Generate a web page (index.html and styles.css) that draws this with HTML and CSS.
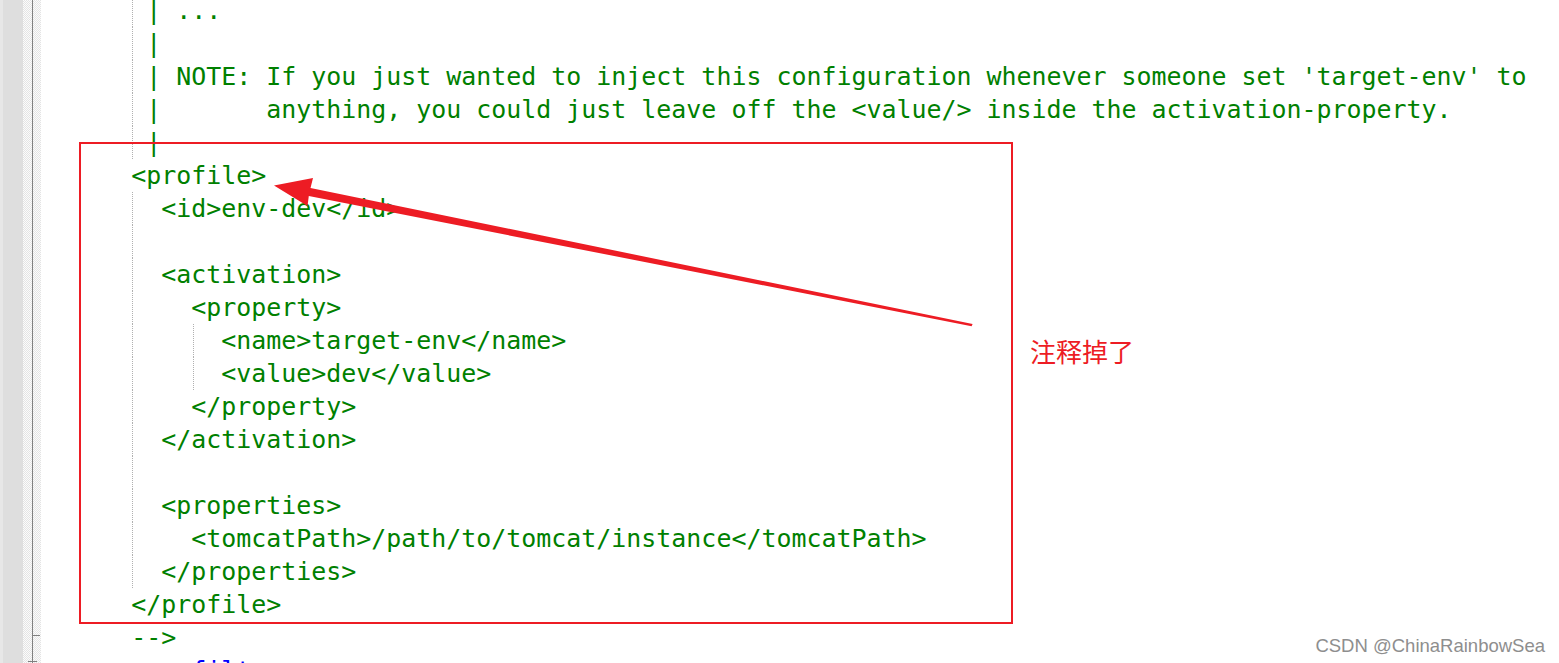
FILE: index.html
```html
<!DOCTYPE html>
<html lang="zh">
<head>
<meta charset="utf-8">
<title>XML editor</title>
<link rel="stylesheet" href="styles.css">
</head>
<body>
<div class="editor">
  <div class="gutter">
    <div class="g-edge"></div>
    <div class="g-margin"></div>
    <div class="g-fold"></div>
  </div>
  <div class="code">
    <div class="line g1">       | ...</div>
    <div class="line g1">       |</div>
    <div class="line g1">       | NOTE: If you just wanted to inject this configuration whenever someone set 'target-env' to</div>
    <div class="line g1">       |       anything, you could just leave off the &lt;value/&gt; inside the activation-property.</div>
    <div class="line g1">       |</div>
    <div class="line">      &lt;profile&gt;</div>
    <div class="line g1">        &lt;id&gt;env-dev&lt;/id&gt;</div>
    <div class="line g1"> </div>
    <div class="line g1">        &lt;activation&gt;</div>
    <div class="line g1">          &lt;property&gt;</div>
    <div class="line g2">            &lt;name&gt;target-env&lt;/name&gt;</div>
    <div class="line g2">            &lt;value&gt;dev&lt;/value&gt;</div>
    <div class="line g1">          &lt;/property&gt;</div>
    <div class="line g1">        &lt;/activation&gt;</div>
    <div class="line g1"> </div>
    <div class="line g1">        &lt;properties&gt;</div>
    <div class="line g1">          &lt;tomcatPath&gt;/path/to/tomcat/instance&lt;/tomcatPath&gt;</div>
    <div class="line g1">        &lt;/properties&gt;</div>
    <div class="line">      &lt;/profile&gt;</div>
    <div class="line">      --&gt;</div>
    <div class="line tag-blue">         &lt;filters&gt;</div>
  </div>

  <div class="annot-box"></div>
  <svg class="annot-arrow" width="1559" height="663" viewBox="0 0 1559 663" xmlns="http://www.w3.org/2000/svg">
    <polygon fill="#ed1c24" points="274,185.5 313,178 310.5,188 972.6,324 971.6,326.2 308.8,196 307.5,206"/>
  </svg>
  <div class="annot-label">注释掉了</div>
  <div class="watermark">CSDN @ChinaRainbowSea</div>
</div>
</body>
</html>
```

FILE: styles.css
```css
html, body {
  margin: 0;
  padding: 0;
  background: #ffffff;
  height: 663px;
  overflow: hidden;
}

.editor {
  position: relative;
  display: flex;
  height: 663px;
  overflow: hidden;
  background: #ffffff;
}

.gutter {
  display: flex;
  flex: none;
}

.g-edge {
  width: 3px;
  background: #e7e7e7;
}

.g-margin {
  width: 20px;
  background: #dedede;
}

.g-fold {
  width: 18px;
  background:
    linear-gradient(#808080, #808080) 9px 0 / 1px 100% no-repeat,
    linear-gradient(#808080, #808080) 9px 635px / 8px 1px no-repeat,
    linear-gradient(#808080, #808080) 5px 661px / 9px 1px no-repeat,
    repeating-conic-gradient(#e4e4e4 0 25%, #fbfbfb 0 50%) 0 0 / 2px 2px;
}

.code {
  flex: 1;
  padding-left: 0.2px;
  margin-top: -6.5px;
  font-family: "DejaVu Sans Mono", "Liberation Mono", monospace;
  font-size: 24.93px;
  line-height: 33px;
  color: #008000;
}

.line {
  height: 33px;
  white-space: pre;
}

.g1 {
  background: repeating-linear-gradient(to bottom, #b0b0b0 0 1px, transparent 1px 2px) 91px 0 / 1px 100% no-repeat;
}

.g2 {
  background:
    repeating-linear-gradient(to bottom, #b0b0b0 0 1px, transparent 1px 2px) 91px 0 / 1px 100% no-repeat,
    repeating-linear-gradient(to bottom, #b0b0b0 0 1px, transparent 1px 2px) 151.5px 0 / 1px 100% no-repeat;
}

.tag-blue {
  color: #0000ff;
}

.annot-box {
  position: absolute;
  left: 79px;
  top: 142px;
  width: 934px;
  height: 482px;
  box-sizing: border-box;
  border: 2px solid #ed1c24;
}

.annot-arrow {
  position: absolute;
  left: 0;
  top: 0;
  pointer-events: none;
}

.annot-label {
  position: absolute;
  left: 1030px;
  top: 338px;
  font-family: "Noto Sans CJK SC", "Noto Sans", sans-serif;
  font-size: 26px;
  line-height: 26px;
  color: #ed1c24;
}

.watermark {
  position: absolute;
  right: 14px;
  top: 637px;
  font-family: "Liberation Sans", Arial, sans-serif;
  font-size: 18.5px;
  line-height: 1;
  color: #8e8e8e;
  text-shadow: 0 0 1px #ffffff;
}
```
